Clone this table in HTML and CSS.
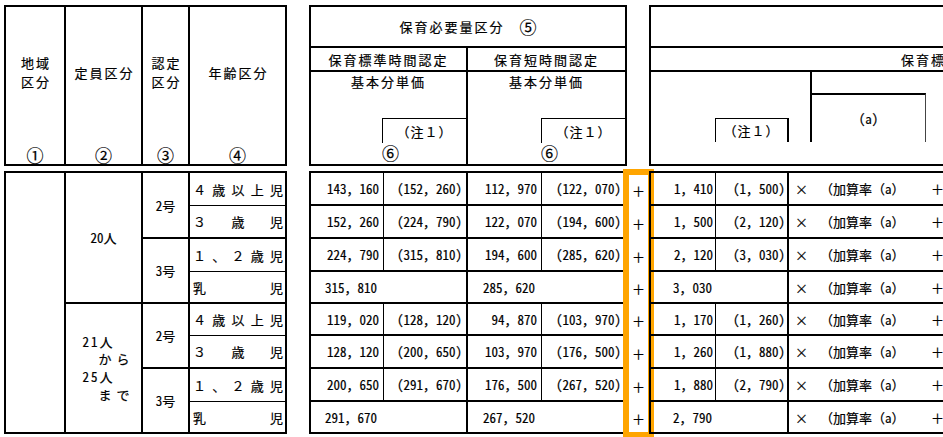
FILE: index.html
```html
<!DOCTYPE html>
<html lang="ja">
<head>
<meta charset="utf-8">
<title>保育必要量区分</title>
<link rel="stylesheet" href="styles.css">
</head>
<body>
<div class="page">
  <!-- left block -->
  <div class="blk blk-left">
    <div class="grid lh">
      <div class="c lhc"><div class="lbl"><div>地域</div><div>区分</div></div><div class="num">①</div></div>
      <div class="c lhc"><div class="lbl">定員区分</div><div class="num">②</div></div>
      <div class="c lhc"><div class="lbl"><div>認定</div><div>区分</div></div><div class="num">③</div></div>
      <div class="c lhc"><div class="lbl">年齢区分</div><div class="num">④</div></div>
    </div>
    <div class="grid lb">
      <div class="c r8"></div>
      <div class="c r4">20人</div>
      <div class="c r2">2号</div>
      <div class="c age bb1"><span>４</span><span>歳</span><span>以</span><span>上</span><span>児</span></div>
      <div class="c age"><span>３</span><span>歳</span><span>児</span></div>
      <div class="c r2">3号</div>
      <div class="c age bb1"><span>１</span><span>、</span><span>２</span><span>歳</span><span>児</span></div>
      <div class="c age"><span>乳</span><span>児</span></div>
      <div class="c r4"><div class="teiin"><div>21人</div><div class="ind">から</div><div>25人</div><div class="ind">まで</div></div></div>
      <div class="c r2">2号</div>
      <div class="c age bb1"><span>４</span><span>歳</span><span>以</span><span>上</span><span>児</span></div>
      <div class="c age"><span>３</span><span>歳</span><span>児</span></div>
      <div class="c r2">3号</div>
      <div class="c age bb1"><span>１</span><span>、</span><span>２</span><span>歳</span><span>児</span></div>
      <div class="c age"><span>乳</span><span>児</span></div>
    </div>
  </div>

  <!-- middle block -->
  <div class="blk blk-mid">
    <div class="grid mh">
      <div class="c hd span2">保育必要量区分　<span class="circ">⑤</span></div>
      <div class="c hd">保育標準時間認定</div>
      <div class="c hd">保育短時間認定</div>
      <div class="c mh3"><div class="hd">基本分単価</div><div class="note hd1">（注１）</div><div class="six"><span class="circ">⑥</span></div></div>
      <div class="c mh3"><div class="hd">基本分単価</div><div class="note hd1">（注１）</div><div class="six"><span class="circ">⑥</span></div></div>
    </div>
    <div class="grid mb">
      <div class="c n br1">143，160</div><div class="c n">(152，260)</div><div class="c n br1">112，970</div><div class="c n">(122，070)</div>
      <div class="c n br1">152，260</div><div class="c n">(224，790)</div><div class="c n br1">122，070</div><div class="c n">(194，600)</div>
      <div class="c n br1">224，790</div><div class="c n">(315，810)</div><div class="c n br1">194，600</div><div class="c n">(285，620)</div>
      <div class="c m span2 m1">315，810</div><div class="c m span2 m2">285，620</div>
      <div class="c n br1">119，020</div><div class="c n">(128，120)</div><div class="c n br1">94，870</div><div class="c n">(103，970)</div>
      <div class="c n br1">128，120</div><div class="c n">(200，650)</div><div class="c n br1">103，970</div><div class="c n">(176，500)</div>
      <div class="c n br1">200，650</div><div class="c n">(291，670)</div><div class="c n br1">176，500</div><div class="c n">(267，520)</div>
      <div class="c m span2 m1">291，670</div><div class="c m span2 m2">267，520</div>
    </div>
  </div>

  <!-- highlighted plus column -->
  <div class="pluscol">
    <div class="p">＋</div><div class="p">＋</div><div class="p">＋</div><div class="p">＋</div>
    <div class="p">＋</div><div class="p">＋</div><div class="p">＋</div><div class="p">＋</div>
  </div>

  <!-- right block -->
  <div class="blk blk-right">
    <div class="grid rh">
      <div class="c nbr"></div>
      <div class="c nbr hd rh2">保育標準時間認定</div>
      <div class="c nbr rh3">
        <div class="rh3-a"><div class="note-r hd1">（注１）</div></div>
        <div class="rh3-b"><div class="a-box">(a)</div></div>
      </div>
    </div>
    <div class="grid rb">
      <div class="c r br1">1，410</div><div class="c r">(1，500)</div><div class="c nbr f"><span class="x">×</span><span class="fm">（加算率（a）</span><span class="pl">＋</span></div>
      <div class="c r br1">1，500</div><div class="c r">(2，120)</div><div class="c nbr f"><span class="x">×</span><span class="fm">（加算率（a）</span><span class="pl">＋</span></div>
      <div class="c r br1">2，120</div><div class="c r">(3，030)</div><div class="c nbr f"><span class="x">×</span><span class="fm">（加算率（a）</span><span class="pl">＋</span></div>
      <div class="c m span2 m3">3，030</div><div class="c nbr f"><span class="x">×</span><span class="fm">（加算率（a）</span><span class="pl">＋</span></div>
      <div class="c r br1">1，170</div><div class="c r">(1，260)</div><div class="c nbr f"><span class="x">×</span><span class="fm">（加算率（a）</span><span class="pl">＋</span></div>
      <div class="c r br1">1，260</div><div class="c r">(1，880)</div><div class="c nbr f"><span class="x">×</span><span class="fm">（加算率（a）</span><span class="pl">＋</span></div>
      <div class="c r br1">1，880</div><div class="c r">(2，790)</div><div class="c nbr f"><span class="x">×</span><span class="fm">（加算率（a）</span><span class="pl">＋</span></div>
      <div class="c m span2 m3">2，790</div><div class="c nbr f"><span class="x">×</span><span class="fm">（加算率（a）</span><span class="pl">＋</span></div>
    </div>
  </div>
</div>
</body>
</html>
```

FILE: styles.css
```css
* { box-sizing: border-box; }
html, body { margin: 0; padding: 0; background: #fff; overflow: hidden; }
body { width: 943px; height: 437px; }

.page {
  display: flex;
  align-items: flex-start;
  padding: 5px 0 0 4px;
  font-family: "Noto Sans Mono CJK JP", "Noto Sans CJK JP", sans-serif;
  font-size: 13px;
  line-height: 17px;
  color: #000;
  -webkit-text-stroke: 0.2px #000;
  white-space: nowrap;
}

.blk { display: flex; flex-direction: column; gap: 5px; flex: none; }
.blk-left { width: 283px; }
.blk-mid { width: 318px; margin-left: 22px; }
.blk-right { width: 400px; margin-left: -1px; }

.grid {
  display: grid;
  border-top: 2px solid #000;
  border-left: 2px solid #000;
}

.c {
  border-right: 2px solid #000;
  border-bottom: 2px solid #000;
  display: flex;
  align-items: center;
  justify-content: center;
  min-width: 0;
}
.br1 { border-right-width: 1px; }
.bb1 { border-bottom-width: 1px; }
.nbr { border-right: 0; }
.span2 { grid-column: span 2; }
.r2 { grid-row: span 2; }
.r4 { grid-row: span 4; }
.r8 { grid-row: span 8; }

.hd { letter-spacing: 2px; }
.hd1 { letter-spacing: 1px; }
.circ { font-size: 17px; letter-spacing: 0; }

/* left header */
.lh { grid-template-columns: 60px 77px 47px 97px; grid-template-rows: 159px; }
.lhc { flex-direction: column; justify-content: flex-start; }
.lhc .lbl {
  margin-top: 46px;
  height: 38px;
  display: flex;
  flex-direction: column;
  align-items: center;
  justify-content: center;
  text-align: center;
  letter-spacing: 2px;
  padding-left: 2px;
  line-height: 19px;
}
.lhc .lbl div { height: 19px; }
.lhc .num { margin-top: auto; padding-bottom: 0; font-size: 17px; line-height: 19px; }

/* left body */
.lb {
  grid-template-columns: 60px 77px 47px 97px;
  grid-template-rows: 33px 33px 33px 32px 32px 33px 33px 32px;
}
.age { justify-content: space-between; padding: 0 2px 0 3px; }
.teiin { margin-left: 10px; }
.teiin div { letter-spacing: 2px; height: 17.7px; line-height: 17.7px; }
.teiin .ind { padding-left: 16px; letter-spacing: 5px; }

/* middle header */
.mh { grid-template-columns: 157px 159px; grid-template-rows: 41px 24px 94px; }
.mh3 { flex-direction: column; justify-content: flex-start; padding-top: 1px; }
.mh3 .note {
  margin-top: auto;
  align-self: flex-end;
  width: 84px;
  height: 25px;
  border-top: 1px solid #000;
  border-left: 1px solid #000;
  display: flex;
  align-items: center;
  justify-content: center;
}
.mh3 .six { align-self: flex-end; width: 84px; height: 21px; line-height: 20px; }

/* middle body */
.mb {
  grid-template-columns: 73px 84px 74px 85px;
  grid-template-rows: 33px 33px 33px 32px 32px 33px 33px 32px;
}
.n { justify-content: flex-end; padding-right: 4px; }
.m { justify-content: flex-start; }
.m1 { padding-left: 14px; }
.m2 { padding-left: 15px; }
.m3 { padding-left: 22px; }

/* plus column */
.pluscol {
  flex: none;
  width: 23px;
  margin-top: 168px;
  display: grid;
  grid-template-rows: 33px 33px 33px 32px 32px 33px 33px 32px;
  outline: 6px solid #ffa500;
  outline-offset: -2px;
}
.p { display: flex; align-items: center; justify-content: center; padding-top: 1px; }

/* right header */
.rh { grid-template-columns: 398px; grid-template-rows: 41px 24px 94px; }
.rh2 { justify-content: flex-start; padding-left: 250px; overflow: hidden; }
.rh3 { align-items: flex-start; justify-content: flex-start; }
.rh3-a { width: 159px; height: 70px; display: flex; align-items: flex-end; }
.note-r {
  margin-left: 64px;
  width: 74px;
  height: 24px;
  border-top: 1px solid #000;
  border-left: 1px solid #000;
  border-right: 2px solid #000;
  display: flex;
  align-items: center;
  justify-content: center;
}
.rh3-b { width: 116px; height: 70px; border-left: 2px solid #000; padding-top: 21px; }
.a-box {
  height: 49px;
  border-top: 2px solid #000;
  border-right: 1px solid #444;
  display: flex;
  align-items: center;
  justify-content: center;
}

/* right body */
.rb {
  grid-template-columns: 65px 73px 260px;
  grid-template-rows: 33px 33px 33px 32px 32px 33px 33px 32px;
}
.r { justify-content: flex-end; padding-right: 2px; }
.f { justify-content: flex-start; padding-left: 6px; }
.f .x { width: 13px; text-align: center; }
.f .fm { margin-left: 12px; width: 111px; }
.f .pl { width: 13px; text-align: center; }
```
